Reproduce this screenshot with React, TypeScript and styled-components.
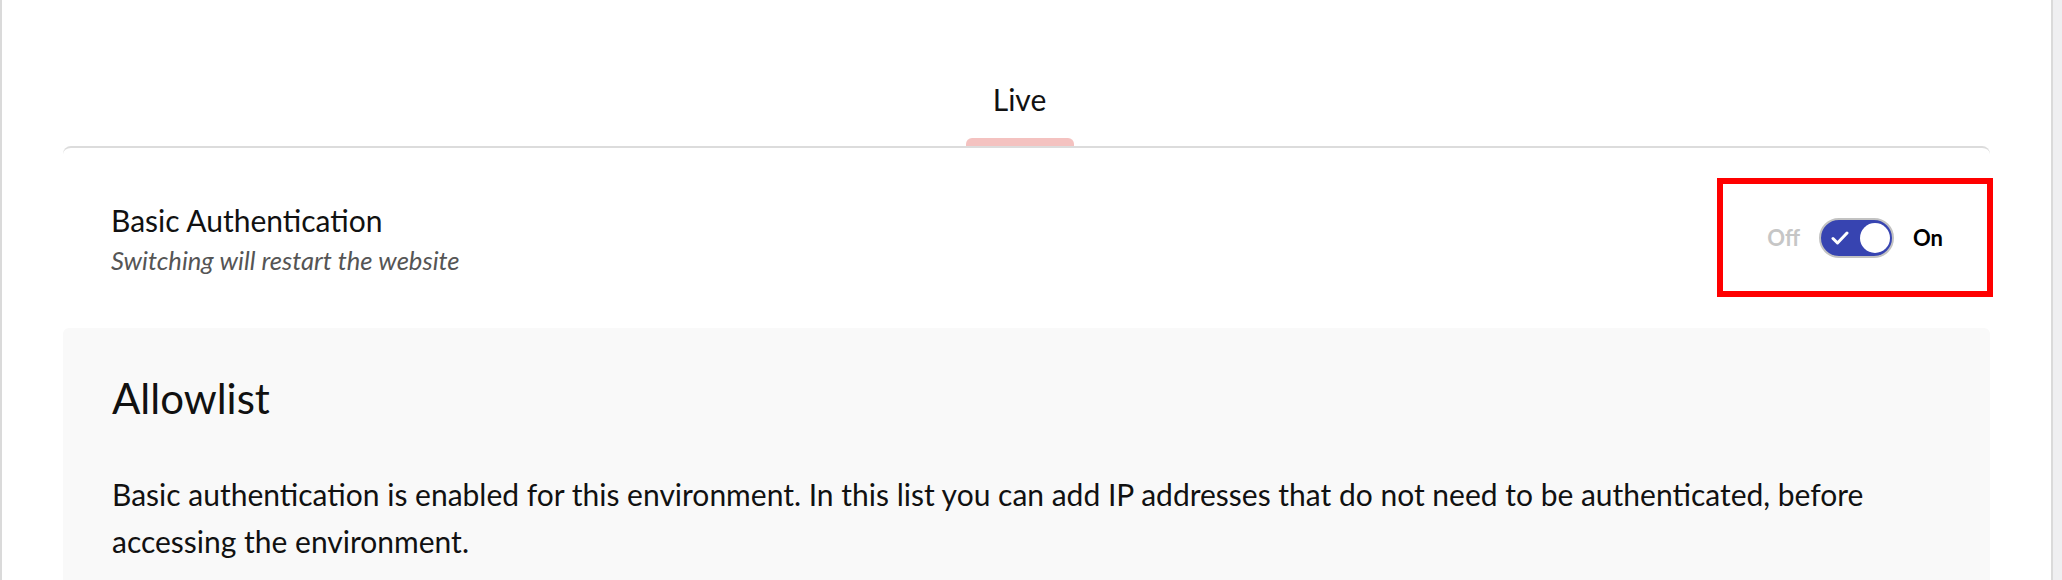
import React, { useState } from "react";
import styled, { createGlobalStyle } from "styled-components";

const GlobalStyle = createGlobalStyle`
  html, body {
    margin: 0;
    padding: 0;
    height: 580px;
    overflow: hidden;
    background: #efeff1;
    font-family: Lato, "Noto Sans", sans-serif;
    color: #111;
  }
`;

const Panel = styled.div`
  width: 2053px;
  height: 580px;
  overflow: hidden;
  background: #fff;
  border-left: 2px solid #dadada;
  border-right: 2px solid #dadada;
  padding: 0 61px;
  box-sizing: border-box;
`;

const TabBar = styled.div`
  display: flex;
  justify-content: center;
  padding: 81px 14px 0 0;
`;

const Tab = styled.div`
  display: flex;
  flex-direction: column;
  align-items: center;
  gap: 21px;
  width: 108px;
`;

const TabLabel = styled.span`
  font-size: 30px;
  line-height: 36px;
  color: #111;
`;

const Indicator = styled.div<{ $active?: boolean }>`
  width: 108px;
  height: 8px;
  border-radius: 6px 6px 0 0;
  background: ${p => (p.$active ? "#f4c2c0" : "transparent")};
`;

const Card = styled.div`
  border-top: 2px solid #dcdcdc;
  border-radius: 8px 8px 0 0;
`;

const SettingRow = styled.div`
  display: flex;
  align-items: center;
  justify-content: space-between;
  padding: 30px 0 31px 48px;
`;

const SettingText = styled.div`
  display: flex;
  flex-direction: column;
  gap: 8px;
`;

const SettingTitle = styled.div`
  font-size: 30px;
  line-height: 36px;
  color: #111;
`;

const SettingHint = styled.div`
  font-size: 25.6px;
  line-height: 28px;
  font-style: italic;
  color: #555;
`;

const Highlight = styled.div`
  display: flex;
  align-items: center;
  gap: 19px;
  height: 119px;
  box-sizing: border-box;
  padding: 0 44px 0 44px;
  border: 6px solid #ff0000;
  margin-right: -3px;
`;

const SwitchLabel = styled.span<{ $on?: boolean }>`
  font-size: 22px;
  font-weight: 700;
  color: ${p => (p.$on ? "#000" : "#c6c6c6")};
`;

const SwitchTrack = styled.button<{ $checked: boolean }>`
  position: relative;
  width: 75px;
  height: 40px;
  padding: 0;
  border-radius: 20px;
  border: 2px solid #c2c2c2;
  background: ${p => (p.$checked ? "#3744b1" : "#ddd")};
  cursor: pointer;
  box-sizing: border-box;
`;

const Knob = styled.span<{ $checked: boolean }>`
  position: absolute;
  top: 3px;
  left: ${p => (p.$checked ? "39px" : "3px")};
  width: 30px;
  height: 30px;
  border-radius: 50%;
  background: #fff;
`;

const Check = styled.svg`
  position: absolute;
  left: 10px;
  top: 11px;
`;

const AllowSection = styled.section`
  background: #f9f9f9;
  border-radius: 6px 6px 0 0;
  padding: 45px 49px 40px 49px;
  height: 300px;
`;

const SectionTitle = styled.h2`
  margin: 0 0 48px;
  font-size: 42px;
  line-height: 50px;
  font-weight: 400;
  color: #111;
`;

const Paragraph = styled.p`
  margin: 0;
  font-size: 30px;
  line-height: 47px;
  color: #111;
`;

const Toggle: React.FC<{ checked: boolean; onChange: (v: boolean) => void }> = ({ checked, onChange }) => (
  <Highlight>
    <SwitchLabel>Off</SwitchLabel>
    <SwitchTrack $checked={checked} onClick={() => onChange(!checked)} aria-pressed={checked}>
      {checked && (
        <Check width="18" height="14" viewBox="0 0 18 14">
          <path d="M2 7.5 L6.5 12 L16 2" fill="none" stroke="#fff" strokeWidth="3" strokeLinecap="round" strokeLinejoin="round" />
        </Check>
      )}
      <Knob $checked={checked} />
    </SwitchTrack>
    <SwitchLabel $on>On</SwitchLabel>
  </Highlight>
);

export default function App() {
  const [enabled, setEnabled] = useState(true);
  return (
    <>
      <GlobalStyle />
      <Panel>
        <TabBar>
          <Tab>
            <TabLabel>Live</TabLabel>
            <Indicator $active />
          </Tab>
        </TabBar>
        <Card>
          <SettingRow>
            <SettingText>
              <SettingTitle>Basic Authentication</SettingTitle>
              <SettingHint>Switching will restart the website</SettingHint>
            </SettingText>
            <Toggle checked={enabled} onChange={setEnabled} />
          </SettingRow>
          <AllowSection>
            <SectionTitle>Allowlist</SectionTitle>
            <Paragraph>
              Basic authentication is enabled for this environment. In this list you can add IP addresses that do not need to be authenticated, before accessing the environment.
            </Paragraph>
          </AllowSection>
        </Card>
      </Panel>
    </>
  );
}
